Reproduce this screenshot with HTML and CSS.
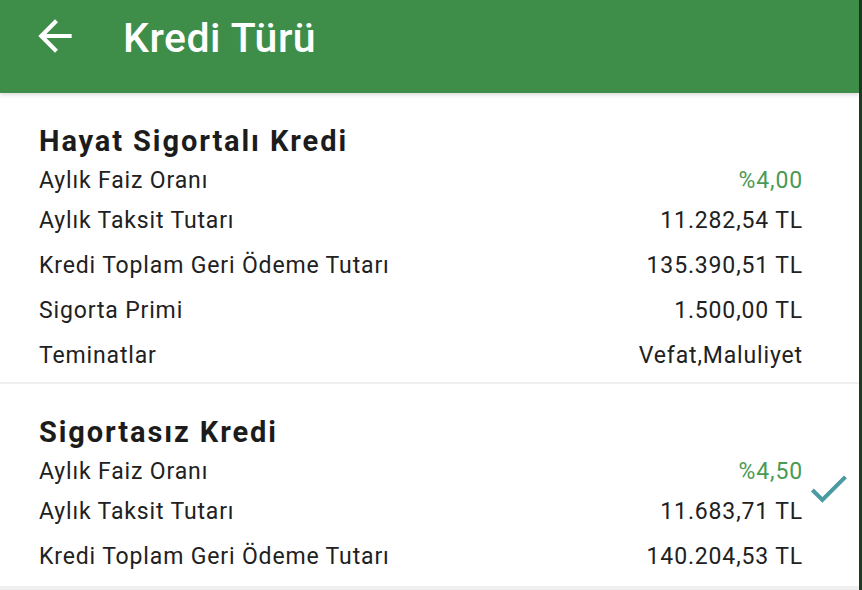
FILE: index.html
```html
<!DOCTYPE html>
<html lang="tr">
<head>
<meta charset="utf-8">
<title>Kredi Türü</title>
<link rel="stylesheet" href="styles.css">
</head>
<body>
<div class="screen">
  <div class="app">
    <header class="appbar">
      <svg class="back" viewBox="0 0 24 24" aria-hidden="true"><path d="M20 11H7.83l5.59-5.59L12 4l-8 8 8 8 1.41-1.41L7.83 13H20v-2z"/></svg>
      <h1 class="title">Kredi Türü</h1>
    </header>
    <main class="list">
      <section class="card">
        <div class="card-body">
          <h2 class="card-title">Hayat Sigortalı Kredi</h2>
          <div class="row row-first"><span class="label">Aylık Faiz Oranı</span><span class="value green">%4,00</span></div>
          <div class="row row-second"><span class="label">Aylık Taksit Tutarı</span><span class="value">11.282,54 TL</span></div>
          <div class="row"><span class="label">Kredi Toplam Geri Ödeme Tutarı</span><span class="value">135.390,51 TL</span></div>
          <div class="row"><span class="label">Sigorta Primi</span><span class="value">1.500,00 TL</span></div>
          <div class="row"><span class="label">Teminatlar</span><span class="value">Vefat,Maluliyet</span></div>
        </div>
        <div class="card-side"></div>
      </section>
      <section class="card">
        <div class="card-body">
          <h2 class="card-title">Sigortasız Kredi</h2>
          <div class="row row-first"><span class="label">Aylık Faiz Oranı</span><span class="value green">%4,50</span></div>
          <div class="row row-second"><span class="label">Aylık Taksit Tutarı</span><span class="value">11.683,71 TL</span></div>
          <div class="row"><span class="label">Kredi Toplam Geri Ödeme Tutarı</span><span class="value">140.204,53 TL</span></div>
        </div>
        <div class="card-side">
          <svg class="check" viewBox="0 0 24 24" aria-hidden="true"><path d="M9 16.17L4.83 12l-1.42 1.41L9 19 21 7l-1.41-1.41z"/></svg>
        </div>
      </section>
    </main>
  </div>
  <div class="edge"></div>
</div>
</body>
</html>
```
FILE: styles.css
```css
html, body {
  margin: 0;
  padding: 0;
}
body {
  width: 862px;
  height: 590px;
  overflow: hidden;
  font-family: Roboto, "Liberation Sans", sans-serif;
  color: #212121;
  background: #f0f0f0;
}
.screen {
  display: flex;
  height: 590px;
}
.app {
  flex: 1;
  display: flex;
  flex-direction: column;
  background: #f0f0f0;
}
.edge {
  width: 3px;
  background: #1d3a24;
}
.appbar {
  position: relative;
  z-index: 1;
  height: 93px;
  flex: none;
  display: flex;
  align-items: flex-start;
  background: #3e8e4a;
  box-shadow: 0 2px 4px rgba(0, 0, 0, 0.14);
}
.back {
  width: 50px;
  height: 50px;
  margin: 11px 0 0 30px;
  fill: #ffffff;
}
.title {
  margin: 14px 0 0 43px;
  font-size: 41px;
  font-weight: 500;
  letter-spacing: 0.5px;
  color: #ffffff;
  line-height: 48px;
}
.list {
  display: flex;
  flex-direction: column;
  gap: 2px;
}
.card {
  display: flex;
  background: #ffffff;
}
.card-body {
  flex: 1;
  padding: 31px 0 11px 39px;
  display: flex;
  flex-direction: column;
}
.card:last-child .card-body {
  padding-bottom: 14px;
}
.card-side {
  width: 57px;
  display: flex;
  align-items: center;
  justify-content: center;
}
.card-title {
  margin: 0 0 8px 0;
  font-size: 29px;
  font-weight: 700;
  letter-spacing: 1.9px;
  line-height: 34px;
  color: #1c1c1c;
}
.row {
  display: flex;
  justify-content: space-between;
  font-size: 23px;
  letter-spacing: 0.85px;
  line-height: 30px;
  margin-top: 15px;
}
.row-first {
  margin-top: 0;
}
.row-second {
  margin-top: 10px;
}
.value {
  margin-right: -1px;
}
.value.green {
  color: #4a9a55;
}
.check {
  width: 49px;
  height: 49px;
  margin-left: -5px;
  margin-top: 6px;
  fill: #4b9aa0;
}
```
